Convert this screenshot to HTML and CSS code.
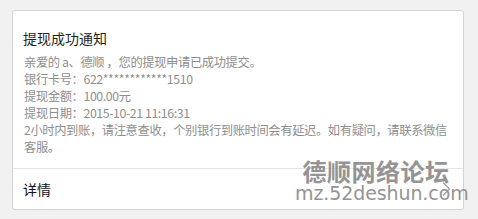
FILE: index.html
```html
<!DOCTYPE html>
<html lang="zh">
<head>
<meta charset="utf-8">
<link rel="stylesheet" href="styles.css">
</head>
<body>
<div class="card">
  <div class="main">
    <div class="title">提现成功通知</div>
    <div class="content">
      <p>亲爱的 a、德顺 ，您的提现申请已成功提交。</p>
      <p>银行卡号：622************1510</p>
      <p>提现金额：100.00元</p>
      <p>提现日期：2015-10-21 11:16:31</p>
      <p>2小时内到账，请注意查收，个别银行到账时间会有延迟。如有疑问，请联系微信客服。</p>
    </div>
  </div>
  <div class="footer">
    <span class="more">详情</span>
    <svg class="chev" width="10" height="16" viewBox="0 0 10 16"><polyline points="2,1.5 8.5,8 2,14.5" fill="none" stroke="#9a9a9a" stroke-width="1.1"/></svg>
  </div>
</div>
<div class="watermark">
  <div class="wm-cn">德顺网络论坛</div>
  <div class="wm-en">mz.52deshun.com</div>
</div>
</body>
</html>
```
FILE: styles.css
```css
html, body {
  margin: 0;
  padding: 0;
}
body {
  background: #f1f1f1;
  font-family: "Noto Sans CJK SC", "Noto Sans", sans-serif;
  width: 478px;
  height: 219px;
  position: relative;
  overflow: hidden;
}
.card {
  margin: 10px 0 0 12px;
  width: 450px;
  height: 198px;
  background: #fff;
  border: 1px solid #d4d4d4;
  border-radius: 3px;
  display: flex;
  flex-direction: column;
}
.main {
  padding: 17px 8px 12px 10px;
  border-bottom: 1px solid #e6e6e6;
}
.title {
  font-size: 14px;
  line-height: 20px;
  color: #1f1f1f;
}
.content {
  margin-top: 6px;
  font-size: 12.3px;
  letter-spacing: -0.4px;
  line-height: 17px;
  color: #8e8e8e;
}
.content p {
  margin: 0;
  padding-left: 1px;
}
.footer {
  flex: 1;
  display: flex;
  align-items: center;
  justify-content: space-between;
  padding: 0 12px 0 10px;
}
.more {
  font-size: 14px;
  color: #111;
}
.chev {
  display: block;
}
.watermark {
  position: absolute;
  left: 295px;
  top: 158px;
  width: 162px;
  color: #949494;
  text-align: center;
}
.wm-cn {
  font-size: 24px;
  line-height: 26px;
  font-weight: bold;
  letter-spacing: 0.5px;
}
.wm-en {
  font-family: "DejaVu Sans", sans-serif;
  font-size: 19px;
  line-height: 19px;
  letter-spacing: -0.1px;
}
```
